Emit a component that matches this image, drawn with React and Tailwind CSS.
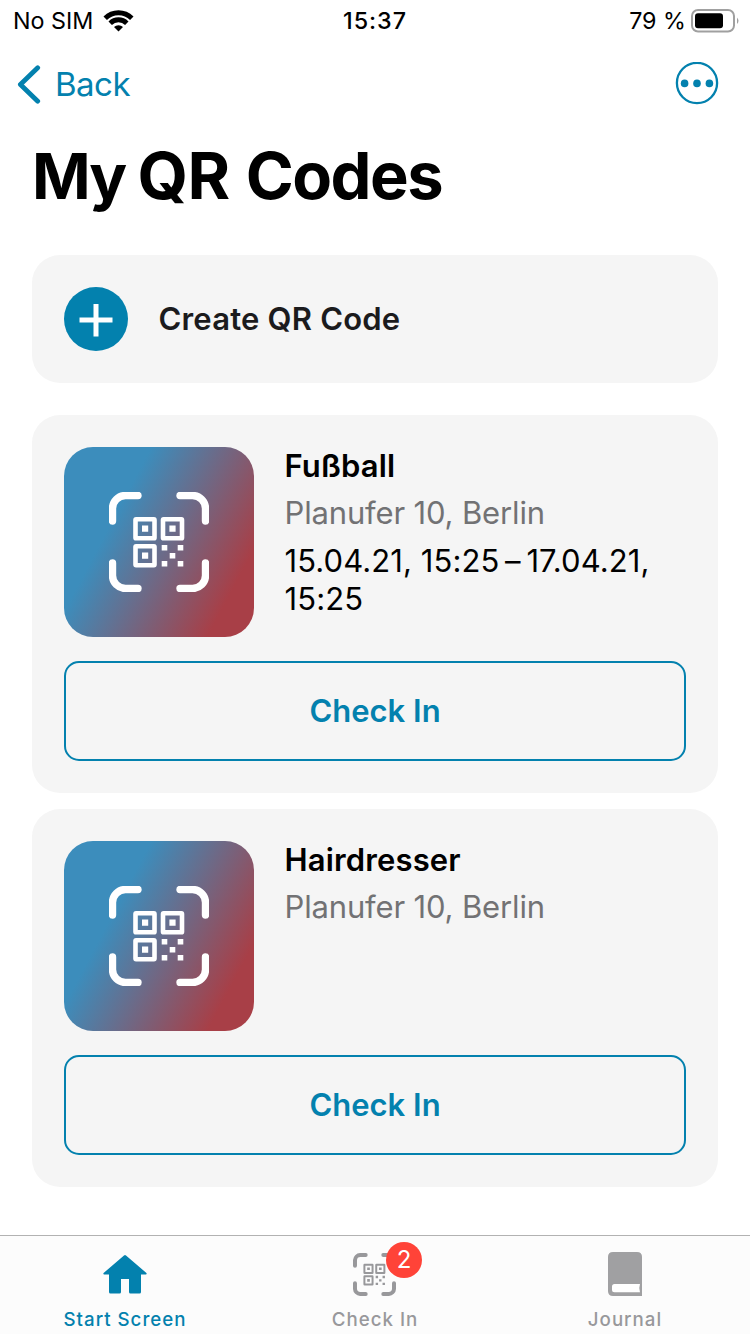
function QrScan({ className, frame = 7 }) {
  return (
    <svg viewBox="45 45 100 100" className={className} fill="none" stroke="currentColor">
      <g strokeWidth={frame} strokeLinecap="round" transform={frame > 7.5 ? "translate(95 95) scale(.976) translate(-95 -95)" : undefined}>
        <path d="M74 48.5H61.5a13 13 0 0 0-13 13V74M116 48.5h12.5a13 13 0 0 1 13 13V74M48.5 116v12.5a13 13 0 0 0 13 13H74M116 141.5h12.5a13 13 0 0 0 13-13V116" />
      </g>
      <g strokeWidth="4.6">
        <rect x="71.5" y="72.3" width="19" height="19" rx=".6" />
        <rect x="99" y="72.3" width="19" height="19" rx=".6" />
        <rect x="71.5" y="99.2" width="19" height="19" rx=".6" />
      </g>
      <g fill="currentColor" stroke="none">
        <path d="M78 78.6h6.2v6.2H78zM105.4 78.6h6.2v6.2h-6.2zM78 105.6h6.2v6.2H78zM97.7 97.9h5.6v5.6h-5.6zM113.7 97.9h5.6v5.6h-5.6zM105.7 105.9h5.6v5.6h-5.6zM97.7 113.9h5.6v5.6h-5.6zM113.7 113.9h5.6v5.6h-5.6z" />
      </g>
    </svg>
  );
}

function StatusBar() {
  return (
    <header className="flex h-[41px] items-center text-[23.3px] leading-[41px]">
      <div className="flex flex-1 items-center pl-[13px]">
        <span>No SIM</span>
        <svg className="ml-[10px] h-[22px] w-[31px]" viewBox="0 0 31 22">
          <path d="M15.5 21.6 11 17.1a6.3 6.3 0 0 1 9 0z" />
          <path d="M7.2 13.2a11.8 11.8 0 0 1 16.6 0M2.2 8.2a18.9 18.9 0 0 1 26.6 0" fill="none" stroke="black" strokeWidth="4.9" />
        </svg>
      </div>
      <span className="-translate-x-px font-medium tracking-[1px]">15:37</span>
      <div className="flex flex-1 items-center justify-end pr-[11px]">
        <span>79 %</span>
        <svg className="ml-[5px] h-[24px] w-[48px]" viewBox="0 0 48 24">
          <rect x="1" y="1" width="42" height="21.5" rx="6" fill="none" stroke="#a0a0a0" strokeWidth="2" />
          <rect x="4" y="4.2" width="28" height="15" rx="3" />
          <path d="M46 8.5q3 3.3 0 6.6z" fill="#a0a0a0" />
        </svg>
      </div>
    </header>
  );
}

function Card({ title, address, date }) {
  return (
    <article className="flex h-[378px] flex-col rounded-[28px] bg-[#f5f5f5] p-8">
      <div className="flex h-[190px] gap-[30.5px]">
        <div className="flex size-[190px] shrink-0 items-center justify-center rounded-[29px] bg-[linear-gradient(118deg,#3c8dbc_30%,#a83f47_84%)] text-white">
          <QrScan className="size-[100px]" frame={7.4} />
        </div>
        <div className="whitespace-nowrap text-[31px] leading-[38px]">
          <h2 className="font-semibold tracking-[0.15px]">{title}</h2>
          <p className="mt-[9px] tracking-[-0.15px] text-[#727274]">{address}</p>
          {date && <p className="mt-[10px] whitespace-pre-line tracking-[0.09px]">{date}</p>}
        </div>
      </div>
      <button className="mt-6 h-[100px] rounded-[15px] border-2 border-[#0381ae] text-[31px] font-semibold text-[#0381ae]">
        Check In
      </button>
    </article>
  );
}

export default function App() {
  return (
    <div className="flex h-[1334px] w-[750px] flex-col bg-white font-['Inter',sans-serif] text-black">
      <StatusBar />
      <nav className="flex h-[86px] items-center justify-between pl-[17px] pr-[31px] text-[#0381ae]">
        <div className="flex items-center">
          <svg className="h-[40px] w-[24px]" viewBox="0 0 24 40" fill="none" stroke="currentColor" strokeWidth="4.8" strokeLinecap="round" strokeLinejoin="round">
            <path d="M20.7 3.8 3.4 20.5l17.3 16.7" />
          </svg>
          <span className="ml-[14px] text-[33px] leading-[40px] tracking-[-0.5px]">Back</span>
        </div>
        <svg className="size-[44px]" viewBox="0 0 44 44">
          <circle cx="22" cy="21" r="20.1" fill="none" stroke="currentColor" strokeWidth="2.3" />
          <circle cx="9.6" cy="21.4" r="3.8" fill="currentColor" />
          <circle cx="22" cy="21.4" r="3.8" fill="currentColor" />
          <circle cx="34.4" cy="21.4" r="3.8" fill="currentColor" />
        </svg>
      </nav>
      <h1 className="mt-[8px] flex h-[82px] whitespace-pre pl-[32px] text-[65px] font-bold leading-[82px] tracking-[-1.5px]">
        <span className="text-[63px] tracking-[-2.2px]">My </span>
        <span className="tracking-[-0.5px]">QR </span>
        <span className="ml-[1px]">Codes</span>
      </h1>
      <main className="mt-[38px] flex flex-col px-8">
        <button className="flex h-[128px] items-center rounded-[28px] bg-[#f5f5f5] pl-8">
          <span className="flex size-16 items-center justify-center rounded-full bg-[#0381ae]">
            <svg className="size-16" viewBox="0 0 64 64">
              <path d="M15.5 33h33M32 17v32.5" stroke="white" strokeWidth="5" />
            </svg>
          </span>
          <span className="ml-[30.5px] text-[31px] font-semibold tracking-[0.2px] text-[#1b1b1d]">Create QR Code</span>
        </button>
        <div className="mt-8 flex flex-col gap-4">
          <Card title="Fußball" address="Planufer 10, Berlin" date={"15.04.21, 15:25\u2009–\u200917.04.21,\n15:25"} />
          <Card title="Hairdresser" address="Planufer 10, Berlin" />
        </div>
      </main>
      <footer className="mt-auto grid h-[99px] grid-cols-3 border-t border-[#b2b2b2] bg-[#fcfcfc] text-[18.7px] font-medium leading-[24px] tracking-[1px] text-[#98989b]">
        <div className="flex flex-col items-center pt-[16px] text-[#0381ae]">
          <svg className="h-[44px] w-[44px]" viewBox="0 0 44 44" fill="currentColor">
            <path d="M21 3.4q1-.8 2 0L43.4 21q.8 1.3-.6 1.5H38V40q0 1.5-1.5 1.5h-9q-1.5 0-1.5-1.5V27h-8v13q0 1.5-1.5 1.5h-9Q6 41.5 6 40V22.5H1.2Q-.2 22.3.6 21z" />
          </svg>
          <span className="mt-[12px]">Start Screen</span>
        </div>
        <div className="flex flex-col items-center pt-[16px]">
          <div className="relative h-[44px] w-[44px] pt-[1px]">
            <QrScan className="size-[43px]" frame={9.5} />
            <span className="absolute left-[33px] top-[-10px] flex size-[36px] items-center justify-center rounded-full bg-[#ff4338] text-[24px] font-normal tracking-normal text-white">2</span>
          </div>
          <span className="mt-[12px]">Check In</span>
        </div>
        <div className="flex flex-col items-center pt-[16px]">
          <svg className="h-[44px] w-[34px]" viewBox="0 0 34 44">
            <path d="M5 0h24q5 0 5 5v39H5q-5 0-5-5V5q0-5 5-5z" fill="#a0a0a2" />
            <path d="M6.5 32H32q-1.5 4 0 8.3H6.5q-2.5 0-2.5-2.5v-3.3Q4 32 6.5 32z" fill="white" />
          </svg>
          <span className="mt-[12px]">Journal</span>
        </div>
      </footer>
    </div>
  );
}
